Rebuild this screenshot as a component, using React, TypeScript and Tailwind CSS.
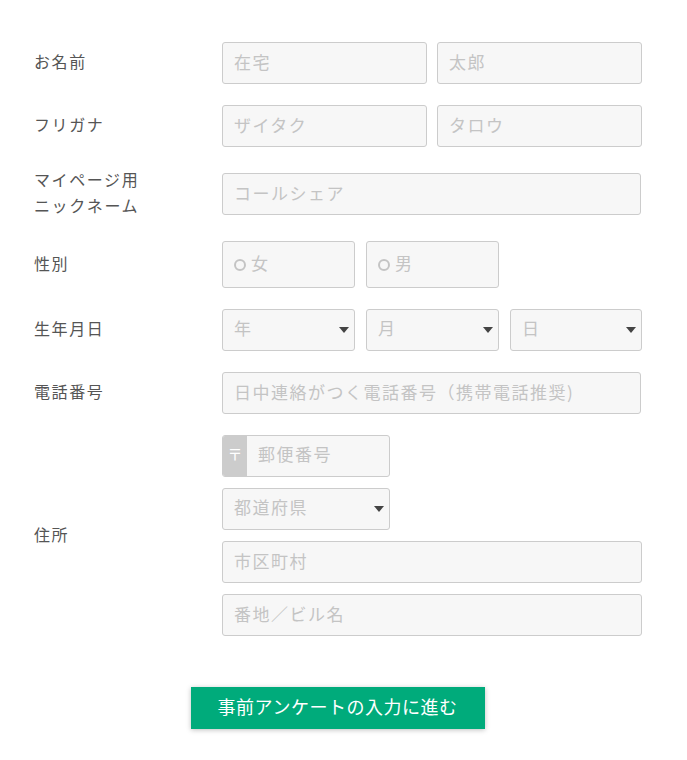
import React from "react";

const font = { fontFamily: '"Noto Sans CJK JP", "Noto Sans", sans-serif' };
const box =
  "h-[42px] rounded-[3px] border border-[#cccccc] bg-[#f7f7f7] px-[11px] pb-[4px] text-[17px] tracking-[1.5px] text-[#444] outline-none placeholder:text-[#c4c4c4]";

function Label({ children }: { children: React.ReactNode }) {
  return (
    <div className="w-[188px] shrink-0 -translate-y-[2px] text-[16px] leading-[26px] tracking-[0.1em] text-[#555]">
      {children}
    </div>
  );
}

function Caret() {
  return (
    <svg width="10" height="6" viewBox="0 0 10 6" className="shrink-0">
      <path d="M0 0h10L5 6z" fill="#444" />
    </svg>
  );
}

function Select({ text, className }: { text: string; className: string }) {
  return (
    <div
      className={`flex h-[42px] items-center justify-between rounded-[3px] border border-[#cccccc] bg-[#f7f7f7] pl-[11px] pr-[5px] text-[17px] tracking-[1.5px] text-[#c4c4c4] ${className}`}
    >
      <span className="pb-[4px]">{text}</span>
      <Caret />
    </div>
  );
}

function Radio({ text }: { text: string }) {
  return (
    <div className="flex h-[47px] w-[133px] items-center gap-[5px] rounded-[3px] border border-[#cccccc] bg-[#f7f7f7] pl-[11px] text-[17px] text-[#c4c4c4]">
      <span className="h-[12px] w-[12px] rounded-full border-2 border-[#c4c4c4]" />
      <span className="pb-[4px]">{text}</span>
    </div>
  );
}

export default function App() {
  return (
    <div className="min-h-[760px] bg-white pt-[42px] pl-[34px]" style={font}>
      <div className="flex w-[607px] flex-col gap-[21px]">
        <div className="flex items-center">
          <Label>お名前</Label>
          <div className="flex flex-1 gap-[10px]">
            <input className={`${box} w-[205px]`} placeholder="在宅" />
            <input className={`${box} w-[205px]`} placeholder="太郎" />
          </div>
        </div>

        <div className="flex items-center">
          <Label>フリガナ</Label>
          <div className="flex flex-1 gap-[10px]">
            <input className={`${box} w-[205px]`} placeholder="ザイタク" />
            <input className={`${box} w-[205px]`} placeholder="タロウ" />
          </div>
        </div>

        <div className="flex items-center">
          <Label>
            マイページ用
            <br />
            ニックネーム
          </Label>
          <input className={`${box} w-[420px]`} placeholder="コールシェア" />
        </div>

        <div className="flex items-center">
          <Label>性別</Label>
          <div className="flex gap-[11px]">
            <Radio text="女" />
            <Radio text="男" />
          </div>
        </div>

        <div className="flex items-center">
          <Label>生年月日</Label>
          <div className="flex gap-[11px]">
            <Select text="年" className="w-[133px]" />
            <Select text="月" className="w-[133px]" />
            <Select text="日" className="w-[132px]" />
          </div>
        </div>

        <div className="flex items-center">
          <Label>電話番号</Label>
          <input
            className={`${box} w-[420px]`}
            placeholder="日中連絡がつく電話番号（携帯電話推奨)"
          />
        </div>

        <div className="flex items-center">
          <Label>住所</Label>
          <div className="flex flex-col gap-[11px]">
            <div className="flex h-[42px] w-[168px] overflow-hidden rounded-[3px] border border-[#cccccc] bg-[#f7f7f7]">
              <div className="flex w-[24px] items-center justify-center bg-[#cccccc] pb-[3px] text-[15px] text-white">
                〒
              </div>
              <input
                className="w-[142px] bg-transparent pb-[4px] pl-[11px] text-[17px] tracking-[1.5px] outline-none placeholder:text-[#c4c4c4]"
                placeholder="郵便番号"
              />
            </div>
            <Select text="都道府県" className="w-[168px]" />
            <input className={`${box} w-[420px]`} placeholder="市区町村" />
            <input className={`${box} w-[420px]`} placeholder="番地／ビル名" />
          </div>
        </div>
      </div>

      <div className="flex w-[607px] justify-center pt-[51px]">
        <button className="h-[42px] w-[294px] bg-[#00ab7b] pb-[3px] text-[18px] tracking-[0.5px] text-white shadow-[0_1px_5px_rgba(0,0,0,0.25)]">
          事前アンケートの入力に進む
        </button>
      </div>
    </div>
  );
}
